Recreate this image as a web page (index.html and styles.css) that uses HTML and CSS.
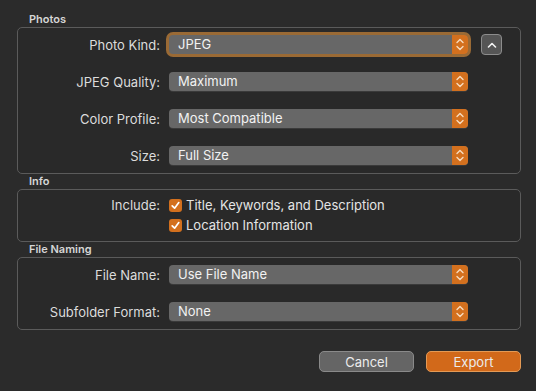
FILE: index.html
```html
<!DOCTYPE html>
<html lang="en">
<head>
    <meta charset="UTF-8">
    <title>Export</title>
    <link rel="stylesheet" href="styles.css">
</head>
<body>
    <div class="dialog">
        <div class="group-title">Photos</div>
        <div class="group">
            <div class="row">
                <span class="label">Photo Kind:</span>
                <div class="popup focused">JPEG<span class="stepper"></span></div>
                <button class="disclosure" type="button">
                    <svg width="10" height="6" viewBox="0 0 10 6"><path d="M1.5 5 L5 1.5 L8.5 5" fill="none" stroke="#f2f2f2" stroke-width="1.6" stroke-linecap="round" stroke-linejoin="round"/></svg>
                </button>
            </div>
            <div class="row">
                <span class="label">JPEG Quality:</span>
                <div class="popup">Maximum<span class="stepper"></span></div>
            </div>
            <div class="row">
                <span class="label">Color Profile:</span>
                <div class="popup">Most Compatible<span class="stepper"></span></div>
            </div>
            <div class="row">
                <span class="label">Size:</span>
                <div class="popup">Full Size<span class="stepper"></span></div>
            </div>
        </div>

        <div class="group-title">Info</div>
        <div class="group info">
            <div class="check-row">
                <span class="label">Include:</span>
                <label class="check"><span class="box"></span>Title, Keywords, and Description</label>
            </div>
            <div class="check-row">
                <span class="label"></span>
                <label class="check"><span class="box"></span>Location Information</label>
            </div>
        </div>

        <div class="group-title">File Naming</div>
        <div class="group">
            <div class="row">
                <span class="label">File Name:</span>
                <div class="popup">Use File Name<span class="stepper"></span></div>
            </div>
            <div class="row">
                <span class="label">Subfolder Format:</span>
                <div class="popup">None<span class="stepper"></span></div>
            </div>
        </div>

        <div class="buttons">
            <button class="btn cancel" type="button">Cancel</button>
            <button class="btn export" type="button">Export</button>
        </div>
    </div>
</body>
</html>
```

FILE: styles.css
```css
body {
    margin: 0;
    background-color: #2b2b2b;
    font-family: Inter, "Liberation Sans", Arial, sans-serif;
    font-size: 13px;
    color: #dcdcdc;
}
.dialog {
    padding: 12px 15px 0 17px;
}
.group-title {
    font-size: 11px;
    font-weight: 600;
    line-height: 15px;
    padding-left: 12px;
    color: #d6d6d6;
}
.group {
    border: 1px solid #5b5b5b;
    border-radius: 5px;
    background-color: #292929;
    padding: 7px 0 8px 0;
    display: flex;
    flex-direction: column;
    gap: 18px;
}
.row, .check-row {
    display: flex;
    align-items: center;
    height: 19px;
}
.label {
    width: 142px;
    margin-right: 9px;
    text-align: right;
    flex-shrink: 0;
}
.popup {
    position: relative;
    width: 299px;
    height: 19px;
    line-height: 19px;
    box-sizing: border-box;
    padding-left: 9px;
    background-color: #676767;
    border-radius: 4px;
    color: #f2f2f2;
    box-shadow: 0 1px 0 #3a3a3a;
}
.popup.focused {
    box-shadow: 0 0 0 3px #9a6a35;
}
.stepper {
    position: absolute;
    right: 0;
    top: 0;
    width: 16px;
    height: 19px;
    border-radius: 0 4px 4px 0;
    background-color: #d3701e;
    background-image: url("data:image/svg+xml;utf8,<svg xmlns='http://www.w3.org/2000/svg' width='16' height='19'><path d='M5 7.5 L8 4.5 L11 7.5 M5 11.5 L8 14.5 L11 11.5' fill='none' stroke='%23f6dcc0' stroke-width='1.4' stroke-linecap='round' stroke-linejoin='round'/></svg>");
}
.disclosure {
    margin-left: 13px;
    width: 21px;
    height: 21px;
    padding: 0;
    border: 1px solid #8c8c8c;
    border-radius: 4px;
    background-color: #555555;
    display: flex;
    align-items: center;
    justify-content: center;
}
.info {
    padding: 5px 0 6px 0;
    gap: 0;
}
.info .check-row {
    height: 20px;
}
.check {
    display: flex;
    align-items: center;
    gap: 4px;
    color: #e4e4e4;
}
.box {
    width: 13px;
    height: 13px;
    border-radius: 3px;
    background-color: #d3701e;
    background-image: url("data:image/svg+xml;utf8,<svg xmlns='http://www.w3.org/2000/svg' width='13' height='13'><path d='M3.2 6.8 L5.6 9.2 L9.8 3.6' fill='none' stroke='white' stroke-width='1.7' stroke-linecap='round' stroke-linejoin='round'/></svg>");
}
.buttons {
    display: flex;
    justify-content: flex-end;
    gap: 12px;
    margin-top: 21px;
}
.btn {
    width: 95px;
    height: 21px;
    font-family: Inter, "Liberation Sans", Arial, sans-serif;
    font-size: 13px;
    color: #ececec;
    border-radius: 5px;
    padding: 0;
}
.cancel {
    background-color: #656565;
    border: 1px solid #8a8a8a;
}
.export {
    background-color: #d2691a;
    border: 1px solid #e49a55;
}
```
